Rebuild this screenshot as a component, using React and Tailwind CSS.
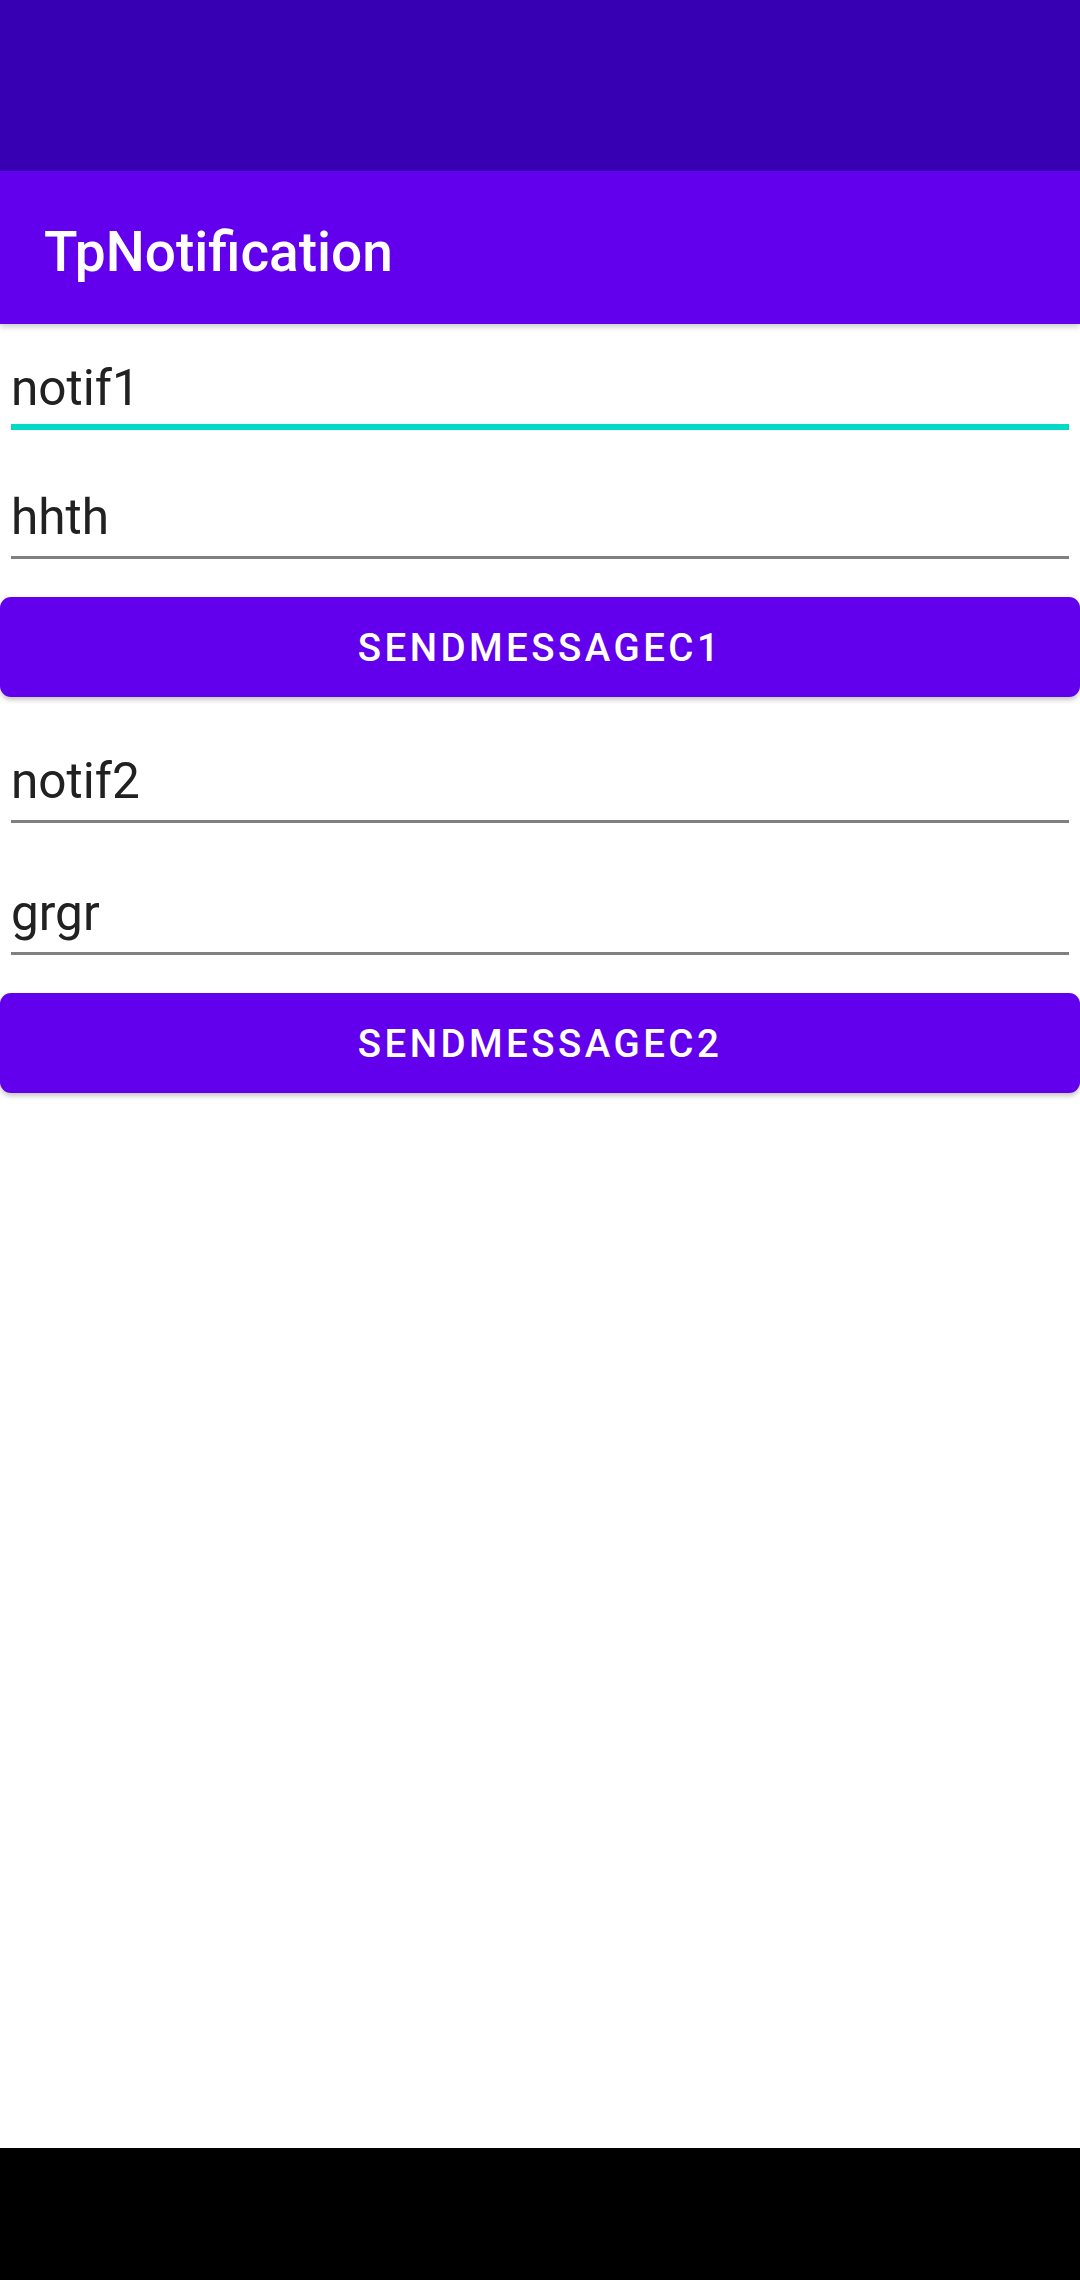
import React from "react";

const font = { fontFamily: "Roboto, 'Noto Sans', sans-serif" };

function Field({ text, focused }) {
  return (
    <div className="relative h-[132px] w-full">
      <div
        className={`pl-[11px] text-[49.5px] leading-[50px] text-[#212121] ${focused ? "pt-[39px]" : "pt-[36px]"}`}
        style={font}
      >
        {text}
      </div>
      {focused ? (
        <div className="absolute left-[11px] right-[11px] top-[100px] h-[6px] bg-[#03DAC5]" />
      ) : (
        <div className="absolute left-[11px] right-[11px] top-[100px] h-[3px] bg-[#808080]" />
      )}
    </div>
  );
}

function Btn({ label }) {
  return (
    <div className="h-[132px] w-full pt-[9px]">
      <div
        className="flex h-[100px] w-full items-center justify-center rounded-[11px] bg-[#6200EE] text-[38.5px] leading-[39px] font-medium tracking-[3.44px] text-white shadow-[0_3px_5px_rgba(0,0,0,0.22)]"
        style={font}
      >
        {label}
      </div>
    </div>
  );
}

export default function App() {
  return (
    <div className="flex h-[2280px] w-[1080px] flex-col bg-white" style={font}>
      <div className="h-[171px] w-full bg-[#3700B3]" />
      <div className="relative z-10 h-[153px] w-full bg-[#6200EE] pl-[44px] pt-[54px] shadow-[0_3px_6px_rgba(0,0,0,0.2)]">
        <div className="text-[55px] leading-[55px] font-medium text-white" style={font}>
          TpNotification
        </div>
      </div>
      <div className="flex-1">
        <Field text="notif1" focused />
        <Field text="hhth" />
        <Btn label="SENDMESSAGEC1" />
        <Field text="notif2" />
        <Field text="grgr" />
        <Btn label="SENDMESSAGEC2" />
      </div>
      <div className="h-[132px] w-full bg-black" />
    </div>
  );
}
